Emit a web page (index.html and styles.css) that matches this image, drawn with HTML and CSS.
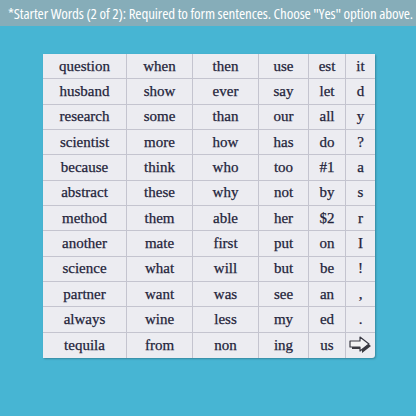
FILE: index.html
```html
<!DOCTYPE html>
<html>
<head>
<meta charset="utf-8">
<link rel="stylesheet" href="styles.css">
</head>
<body>
<div class="header">*Starter Words (2 of 2): Required to form sentences. Choose "Yes" option above.</div>
<div class="board">
<div class="cell">question</div><div class="cell">when</div><div class="cell">then</div><div class="cell">use</div><div class="cell">est</div><div class="cell">it</div>
<div class="cell">husband</div><div class="cell">show</div><div class="cell">ever</div><div class="cell">say</div><div class="cell">let</div><div class="cell">d</div>
<div class="cell">research</div><div class="cell">some</div><div class="cell">than</div><div class="cell">our</div><div class="cell">all</div><div class="cell">y</div>
<div class="cell">scientist</div><div class="cell">more</div><div class="cell">how</div><div class="cell">has</div><div class="cell">do</div><div class="cell">?</div>
<div class="cell">because</div><div class="cell">think</div><div class="cell">who</div><div class="cell">too</div><div class="cell">#1</div><div class="cell">a</div>
<div class="cell">abstract</div><div class="cell">these</div><div class="cell">why</div><div class="cell">not</div><div class="cell">by</div><div class="cell">s</div>
<div class="cell">method</div><div class="cell">them</div><div class="cell">able</div><div class="cell">her</div><div class="cell">$2</div><div class="cell">r</div>
<div class="cell">another</div><div class="cell">mate</div><div class="cell">first</div><div class="cell">put</div><div class="cell">on</div><div class="cell">I</div>
<div class="cell">science</div><div class="cell">what</div><div class="cell">will</div><div class="cell">but</div><div class="cell">be</div><div class="cell">!</div>
<div class="cell">partner</div><div class="cell">want</div><div class="cell">was</div><div class="cell">see</div><div class="cell">an</div><div class="cell">,</div>
<div class="cell">always</div><div class="cell">wine</div><div class="cell">less</div><div class="cell">my</div><div class="cell">ed</div><div class="cell">.</div>
<div class="cell">tequila</div><div class="cell">from</div><div class="cell">non</div><div class="cell">ing</div><div class="cell">us</div><div class="cell arrow"><svg width="24" height="18" viewBox="0 0 24 18"><polygon points="3,7 13,7 13,3 22,10 13,17 13,13 3,13" fill="#3a3a40"/><polygon points="1,5 11,5 11,1 20,8 11,15 11,11 1,11" fill="#f2f2f4" stroke="#3a3a44" stroke-width="1.2" stroke-linejoin="round"/></svg></div>
</div>
</body>
</html>
```

FILE: styles.css
```css
html, body {
  margin: 0;
  padding: 0;
}
body {
  background: #47b5d3;
  width: 416px;
  height: 416px;
  overflow: hidden;
}
.header {
  height: 26px;
  background: #86adb9;
  color: #ffffff;
  font-family: "Open Sans", "Roboto", sans-serif;
  font-stretch: condensed;
  font-size: 15px;
  letter-spacing: -0.12px;
  line-height: 26px;
  padding-left: 8px;
  white-space: nowrap;
}
.board {
  margin: 28px 0 0 43px;
  width: 332px;
  display: grid;
  grid-template-columns: 84px 66px 66px 50px 37px 29px;
  grid-auto-rows: 25.33px;
  background: #ececf1;
  box-shadow: 1px 1px 2px rgba(0,0,0,0.25);
  border-radius: 0 0 3px 0;
}
.cell {
  display: flex;
  align-items: center;
  justify-content: center;
  font-family: "Liberation Serif", "Times New Roman", serif;
  font-size: 15px;
  color: #23233a;
  -webkit-text-stroke: 0.25px #23233a;
  border-right: 1px solid #c4c4cf;
  border-bottom: 1px solid #c4c4cf;
  box-sizing: border-box;
}
.cell:nth-child(6n) {
  border-right: none;
}
.cell:nth-last-child(-n+6) {
  border-bottom: none;
}
.arrow svg {
  display: block;
}
```
